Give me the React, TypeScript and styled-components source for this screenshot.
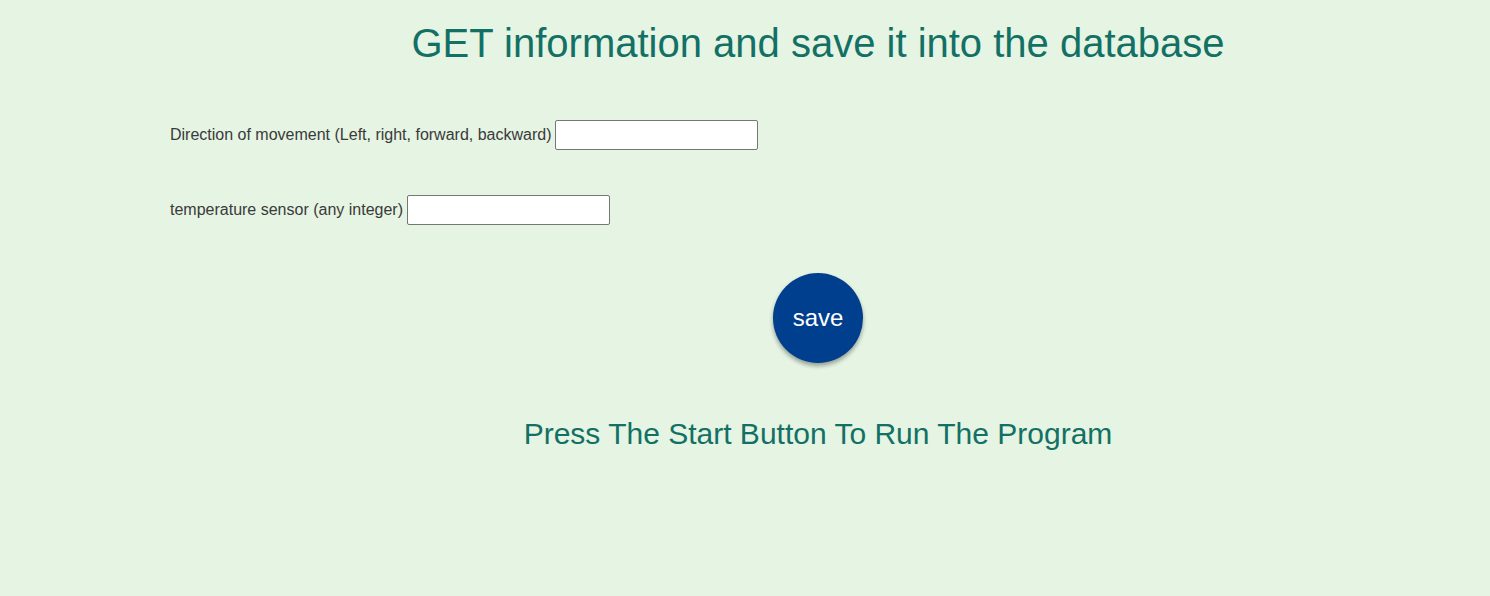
import React from "react";
import styled, { createGlobalStyle } from "styled-components";

const Global = createGlobalStyle`
  html, body {
    margin: 0;
    padding: 0;
    background: #e5f4e3;
    font-family: "Liberation Sans", Arial, sans-serif;
  }
`;

const Page = styled.div`
  margin: 0 24px 0 170px;
  padding-top: 18px;
`;

const Title = styled.h1`
  margin: 0;
  text-align: center;
  font-weight: normal;
  font-size: 40px;
  line-height: 50px;
  color: #137064;
`;

const Form = styled.form`
  display: flex;
  flex-direction: column;
  gap: 45px;
  margin-top: 52px;
`;

const Row = styled.div`
  display: flex;
  align-items: center;
  gap: 4px;
`;

const Label = styled.label`
  font-size: 16px;
  line-height: 18px;
  margin-top: -1px;
  color: #3a3a3a;
`;

const Input = styled.input`
  box-sizing: border-box;
  width: 203px;
  height: 30px;
  border: 1px solid #767676;
  border-radius: 2px;
  background: #fff;
  padding: 2px 4px;
  font-family: inherit;
`;

const ButtonWrap = styled.div`
  display: flex;
  justify-content: center;
  margin-top: 48px;
`;

const SaveButton = styled.button`
  width: 90px;
  height: 90px;
  border-radius: 50%;
  border: none;
  background: #003f8e;
  color: #fff;
  font-family: inherit;
  font-size: 24px;
  box-shadow: 0 3px 4px rgba(0, 0, 0, 0.35);
  cursor: pointer;
`;

const Note = styled.p`
  margin: 53px 0 0;
  text-align: center;
  font-size: 30px;
  line-height: 36px;
  color: #137064;
`;

export default function App() {
  return (
    <>
      <Global />
      <Page>
        <Title>GET information and save it into the database</Title>
        <Form onSubmit={(e) => e.preventDefault()}>
          <Row>
            <Label htmlFor="dir">Direction of movement (Left, right, forward, backward)</Label>
            <Input id="dir" type="text" />
          </Row>
          <Row>
            <Label htmlFor="temp">temperature sensor (any integer)</Label>
            <Input id="temp" type="text" />
          </Row>
        </Form>
        <ButtonWrap>
          <SaveButton type="button">save</SaveButton>
        </ButtonWrap>
        <Note>Press The Start Button To Run The Program</Note>
      </Page>
    </>
  );
}
